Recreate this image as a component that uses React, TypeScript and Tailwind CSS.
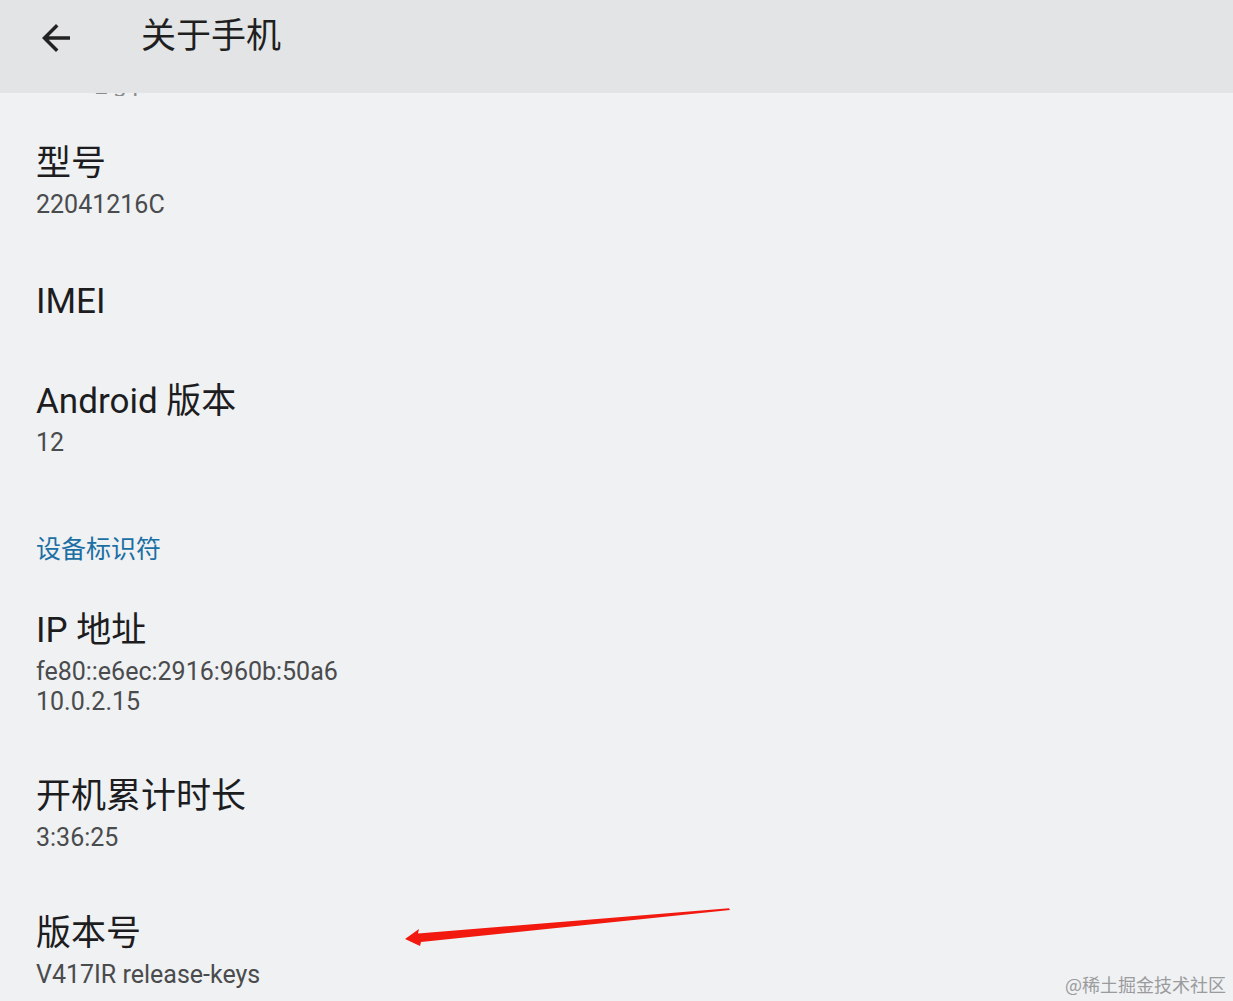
import React from "react";

const font = { fontFamily: 'Roboto, "Noto Sans CJK SC", sans-serif' };

type Item = { title: string; lines?: string[]; pt: string };

const items: Item[] = [
  { title: "型号", lines: ["22041216C"], pt: "pt-[51px]" },
  { title: "IMEI", pt: "pt-[62px]" },
  { title: "Android 版本", lines: ["12"], pt: "pt-[60px]" },
];

const items2: Item[] = [
  { title: "IP 地址", lines: ["fe80::e6ec:2916:960b:50a6", "10.0.2.15"], pt: "pt-[46px]" },
  { title: "开机累计时长", lines: ["3:36:25"], pt: "pt-[60px]" },
  { title: "版本号", lines: ["V417IR release-keys"], pt: "pt-[61px]" },
];

function Row({ item }: { item: Item }) {
  return (
    <div className={item.pt}>
      <div className="text-[35px] leading-[40px] text-[#1d1d1f]">{item.title}</div>
      {item.lines && (
        <div className="mt-[6px]">
          {item.lines.map((l) => (
            <div key={l} className="text-[25px] leading-[30px] text-[#4a4b4d]">
              {l}
            </div>
          ))}
        </div>
      )}
    </div>
  );
}

export default function App() {
  return (
    <div className="relative w-[1233px] h-[1001px] overflow-hidden bg-[#eff1f3]" style={font}>
      {/* toolbar */}
      <header className="h-[93px] bg-[#e3e4e6] flex items-center">
        <svg viewBox="0 0 24 24" className="w-[42px] h-[42px] ml-[35px] -mt-[17px] fill-[#222]">
          <path d="M20 11H7.83l5.59-5.59L12 4l-8 8 8 8 1.41-1.41L7.83 13H20v-2z" />
        </svg>
        <h1 className="ml-[64px] -mt-[19px] text-[35px] leading-[40px] text-[#1f1f21]">关于手机</h1>
      </header>

      <main className="pl-[36px]">
        <div className="h-[3px] overflow-hidden">
          <div className="text-[24px] leading-[30px] text-[#8a8b8d] -mt-[24px] pl-[4px] tracking-[6px]">
            sdk_gphone
          </div>
        </div>
        <div className="-mt-[3px]">
          {items.map((it) => (
            <Row key={it.title} item={it} />
          ))}
          <div className="pt-[77px] text-[25px] leading-[30px] text-[#1b6fa3]">设备标识符</div>
          {items2.map((it) => (
            <Row key={it.title} item={it} />
          ))}
        </div>
      </main>

      {/* annotation arrow */}
      <svg className="absolute left-0 top-0 pointer-events-none" width="1233" height="1001">
        <polygon
          points="405,939 419,929 418,933.5 729,908.3 730,910 421,942 420,946"
          fill="#f2190f"
        />
      </svg>

      {/* watermark */}
      <div
        className="absolute right-[7px] top-[973px] text-[18px] leading-[22px] text-[#9b9b9d]"
        style={{ fontFamily: '"Noto Sans CJK SC", sans-serif' }}
      >
        @稀土掘金技术社区
      </div>
    </div>
  );
}
